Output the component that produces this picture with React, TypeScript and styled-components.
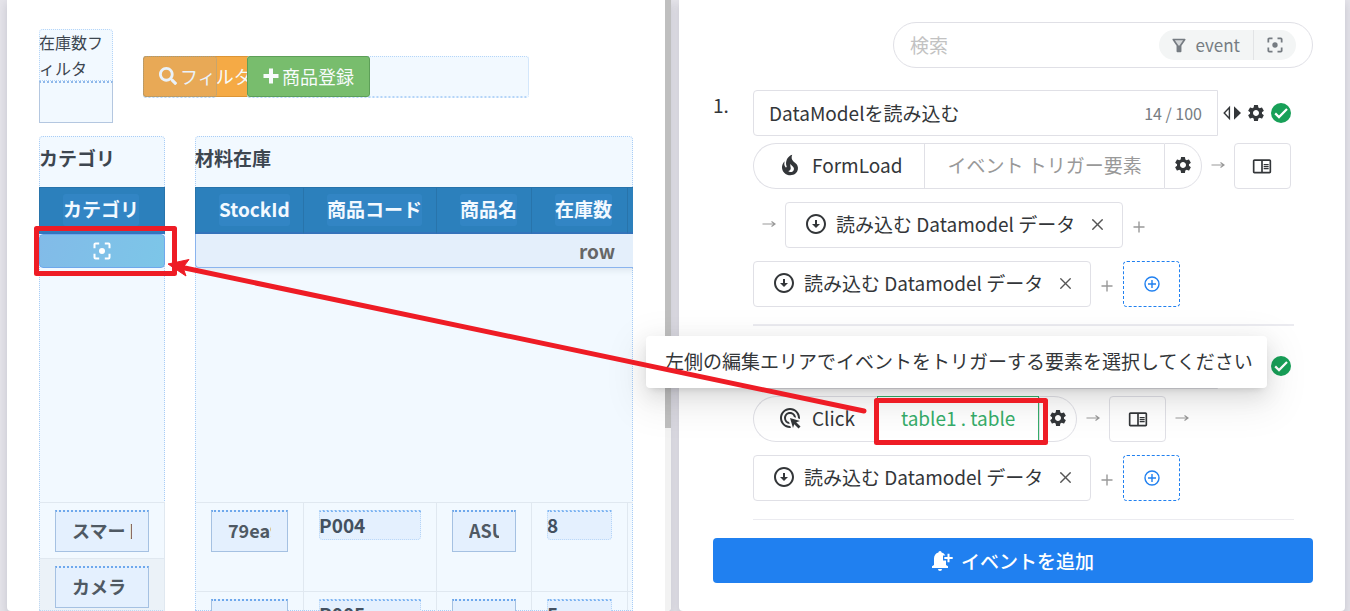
import React from "react";
import styled, { createGlobalStyle, css } from "styled-components";
import {
  MdSettings,
  MdOutlineChromeReaderMode,
  MdOutlineArrowCircleDown,
  MdAdsClick,
} from "react-icons/md";
import { FaSearch } from "react-icons/fa";
import { X } from "lucide-react";

const Global = createGlobalStyle`
  *, *::before, *::after { box-sizing: border-box; }
  body {
    margin: 0;
    background: #e4e3e9;
    color: #333639;
    font-family: "Noto Sans CJK JP", "Noto Sans", sans-serif;
    font-size: 19px;
    line-height: 28px;
  }
  button, input { font: inherit; color: inherit; margin: 0; }
  button { cursor: pointer; padding: 0; background: none; }
  svg { display: block; flex: none; }
`;

const Page = styled.div`
  position: relative;
  display: grid;
  grid-template-columns: minmax(0, 664fr) minmax(0, 666fr);
  gap: 8px;
  height: 100vh;
  padding: 0 5px 0 7px;
  overflow: hidden;
`;

const panel = css`
  background: #fff;
  border-radius: 0 0 4px 4px;
  box-shadow: 0 4px 8px rgba(40, 36, 70, 0.16);
`;

/* ---------- Preview side ---------- */

const Preview = styled.section`
  ${panel}
  display: flex;
  min-height: 0;
  overflow: hidden;
`;

const Canvas = styled.div`
  flex: 1;
  min-width: 0;
  display: grid;
  grid-template-columns: repeat(12, minmax(0, 1fr));
  grid-template-rows: auto auto;
  gap: 13px 30px;
  align-content: start;
  padding: 29px 32px 0;
`;

const ScrollTrack = styled.div`
  flex: none;
  width: 6px;
  background: #f2f2f2;
`;

const ScrollThumb = styled.div`
  height: 70%;
  background: #bfbfbf;
`;

const Cell = styled.div<{ $span: number }>`
  grid-column: span ${(p) => p.$span};
  min-width: 0;
`;

const ButtonCell = styled(Cell)`
  position: relative;
  align-self: start;
  height: 42px;
  margin-top: 27px;
  border: 1px dotted #b5d5f8;
  border-bottom-width: 2px;
  border-radius: 3px;
  background: #f2f9ff;
`;

const Veil = styled.span`
  position: absolute;
  inset: -1px;
  border: 1px dotted #a9a183;
  border-radius: 3px;
  background: rgba(115, 170, 249, 0.1);
  pointer-events: none;
`;

const FilterLabel = styled.label`
  display: block;
  height: 52px;
  border-radius: 4px 4px 0 0;
  outline: 1px dotted #b5d5f8;
  outline-offset: -1px;
  background: #f2f9ff;
  color: #3d4650;
  font-size: 16px;
  line-height: 26px;
`;

const FilterInput = styled.input`
  display: block;
  width: 100%;
  height: 42px;
  border: 1px solid #b4c7e0;
  border-top: 2px dotted #8fb8ea;
  border-radius: 0;
  background: #f2f9ff;
  padding: 0 8px;
  outline: 0;
`;

const ActionButton = styled.button<{ $tone: "orange" | "green" }>`
  display: flex;
  align-items: center;
  gap: 3px;
  height: 41px;
  margin: -1px;
  padding: 0 15px 2px;
  border: 1px solid ${(p) => (p.$tone === "green" ? "#5d9f58" : "#dc9536")};
  border-radius: 3px;
  background: ${(p) => (p.$tone === "green" ? "#78bd6d" : "#f5aa45")};
  color: #f7fbfb;
  font-size: 18px;
  white-space: nowrap;
`;

const TableCard = styled(Cell)`
  position: relative;
  isolation: isolate;
  overflow: hidden;
  &::before {
    content: "";
    position: absolute;
    z-index: -1;
    inset: 0;
    border: 1px dotted #a9cdf6;
    border-radius: 4px 4px 0 0;
    background: #f2f9ff;
  }
`;

const TableTitle = styled.h2`
  margin: 0;
  height: 51px;
  font-size: 19px;
  line-height: 44px;
  color: #3d4650;
`;

const Table = styled.table<{ $width: string }>`
  width: ${(p) => p.$width};
  table-layout: fixed;
  border-collapse: separate;
  border-spacing: 0;
`;

const HeadCell = styled.th`
  height: 47px;
  padding: 0 0 0 23px;
  border-right: 1px solid #2874ab;
  border-top: 1px solid #2874ab;
  border-bottom: 2px solid #3474bd;
  background: #2c80bc;
  color: #f2f9ff;
  text-align: left;
  white-space: nowrap;
  &:first-child { border-left: 1px solid #2874ab; }
`;

const HeadText = styled.span`
  display: inline-block;
  height: 32px;
  line-height: 30px;
  border-radius: 3px;
  background: #3285c4;
  vertical-align: middle;
`;

const RowBand = styled.td`
  height: 34px;
  padding: 0;
  border: 1px solid #8ab4ee;
  border-top: 0;
  border-radius: 0 0 4px 4px;
  background: #e4effb;
  box-shadow: 0 2px 6px rgba(60, 80, 110, 0.12);
  color: #666;
  font-weight: 700;
  line-height: 30px;
  text-align: center;
`;

const PickCell = styled.td`
  height: 34px;
  padding: 0;
`;

const PickButton = styled.button`
  display: grid;
  place-items: center;
  width: 100%;
  height: 34px;
  border: 1px solid #6ea8ec;
  border-radius: 4px;
  background: linear-gradient(110deg, #82bbe8, #7cc6e8);
  color: #fff;
`;

const BlankCell = styled.td`
  height: 234px;
  padding: 0;
`;

const BodyCell = styled.td<{ $height: number; $striped?: boolean }>`
  height: ${(p) => p.$height}px;
  padding: 7px 15px 0;
  border-top: 1px solid #e0e8f0;
  border-right: 1px solid #e0e8f0;
  background: ${(p) => (p.$striped ? "rgba(225, 232, 238, 0.4)" : "transparent")};
  vertical-align: top;
  &:first-child { border-left: 1px solid transparent; }
`;

const CellInput = styled.input`
  display: block;
  width: 100%;
  height: 42px;
  padding: 0 16px 3px;
  border: 1px solid #a5c1e2;
  border-top: 2px dotted #6ea8ec;
  border-radius: 0;
  background: #e4f0fe;
  color: #4f5963;
  font-size: 18px;
  font-weight: 700;
  outline: 0;
`;

const CellLabel = styled.div`
  height: 30px;
  border-top: 2px dotted #7fb5f2;
  border-radius: 0 0 4px 4px;
  outline: 1px dotted #b5d5f8;
  outline-offset: -1px;
  background: #e4f0fe;
  color: #435060;
  font-weight: 700;
  line-height: 26px;
`;

/* ---------- Event side ---------- */

const EventPanel = styled.section`
  ${panel}
  display: flex;
  flex-direction: column;
  padding: 22px 32px 28px 34px;
`;

const SearchBox = styled.div`
  display: flex;
  align-items: center;
  align-self: flex-end;
  width: 70%;
  height: 46px;
  padding: 0 16px;
  border: 1px solid #e0e0e6;
  border-radius: 23px;
`;

const SearchInput = styled.input`
  flex: 1;
  min-width: 0;
  padding: 0;
  border: 0;
  outline: 0;
  background: none;
  &::placeholder { color: #c2c2c2; opacity: 1; }
`;

const TagGroup = styled.div`
  display: flex;
  height: 30px;
  overflow: hidden;
  border-radius: 15px;
  background: #f3f5f5;
  color: #767c82;
`;

const TagButton = styled.button`
  display: flex;
  align-items: center;
  gap: 10px;
  padding: 0 13px;
  border: 0;
  font-size: 17px;
  & + & { border-left: 1px solid #e2e4e6; }
`;

const EventList = styled.ol`
  list-style: none;
  margin: 22px 0 18px;
  padding: 0 19px 0 0;
`;

const EventItem = styled.li`
  position: relative;
  display: grid;
  grid-template-columns: 40px minmax(0, 1fr);
  & + & { margin-top: 17px; }
`;

const Index = styled.span`
  grid-column: 1;
  line-height: 30px;
`;

const EventBody = styled.div<{ $rule: number }>`
  grid-column: 2;
  padding-bottom: ${(p) => (p.$rule > 1 ? 17 : 18)}px;
  border-bottom: ${(p) => p.$rule}px solid #ebebf0;
`;

const NameRow = styled.div`
  display: flex;
  align-items: center;
  gap: 5px;
  padding-right: 3px;
`;

const NameField = styled.div`
  flex: 1;
  min-width: 0;
  display: flex;
  align-items: center;
  height: 46px;
  padding: 0 15px;
  border: 1px solid #e0e0e6;
  border-radius: 4px 0 0 4px;
`;

const NameInput = styled.input`
  flex: 1;
  min-width: 0;
  padding: 0;
  border: 0;
  outline: 0;
  background: none;
`;

const Counter = styled.span`
  color: #767c82;
  font-size: 16px;
`;

const IconButton = styled.button`
  display: grid;
  place-items: center;
  border: 0;
`;

const Flow = styled.div`
  display: flex;
  flex-wrap: wrap;
  row-gap: 13px;
  margin-top: 7px;
`;

const Pill = styled.div`
  display: flex;
  height: 46px;
`;

const Segment = styled.button<{ $kind: "type" | "target" | "picked" | "more" }>`
  display: flex;
  align-items: center;
  gap: 10px;
  border: 1px solid #e0e0e6;
  white-space: nowrap;
  ${(p) =>
    p.$kind === "type" &&
    css`
      padding: 0 22px 2px 24px;
      border-right: 0;
      border-radius: 23px 0 0 23px;
    `}
  ${(p) =>
    p.$kind === "target" &&
    css`
      padding: 0 22px 2px;
      border-right: 0;
      color: #999;
    `}
  ${(p) =>
    p.$kind === "picked" &&
    css`
      padding: 0 23px 2px;
      border-color: #36ad6a;
      color: #36ad6a;
    `}
  ${(p) =>
    p.$kind === "more" &&
    css`
      width: 38px;
      padding: 0 8px 2px;
      border-radius: 0 23px 23px 0;
    `}
`;

const Joint = styled.span`
  display: grid;
  place-items: center;
  width: 32px;
  height: 46px;
  padding-bottom: 2px;
  color: #999;
`;

const BoxButton = styled.button<{ $dashed?: boolean }>`
  display: grid;
  place-items: center;
  width: 57px;
  height: 46px;
  border: 1px ${(p) => (p.$dashed ? "dashed #2080f0" : "solid #e0e0e6")};
  border-radius: 4px;
  color: ${(p) => (p.$dashed ? "#2080f0" : "#333639")};
`;

const Chip = styled.div`
  display: flex;
  align-items: center;
  gap: 8px;
  height: 46px;
  padding: 0 15px 2px 18px;
  border: 1px solid #e0e0e6;
  border-radius: 4px;
  white-space: nowrap;
`;

const ChipClose = styled(IconButton)`
  margin-left: 5px;
  color: #555;
`;

const AddEvent = styled.button`
  display: flex;
  align-items: center;
  justify-content: center;
  gap: 8px;
  width: 100%;
  height: 45px;
  border: 0;
  border-radius: 4px;
  background: #2080f0;
  color: #fff;
  font-weight: 500;
`;

const Hint = styled.div`
  position: absolute;
  z-index: 2;
  top: -7px;
  left: -67px;
  padding: 11px 14px 13px 19px;
  border-radius: 4px;
  background: #fff;
  white-space: nowrap;
  box-shadow: 0 4px 8px -5px rgba(0, 0, 0, 0.2), 0 8px 21px rgba(0, 0, 0, 0.1),
    0 12px 37px 11px rgba(0, 0, 0, 0.06);
`;

const Annotation = styled.svg`
  position: absolute;
  z-index: 3;
  top: 0;
  left: 0;
  pointer-events: none;
`;

/* ---------- Icons ---------- */

const Arrow = () => (
  <Joint>
    <svg width="14" height="10" viewBox="0 0 14 10" fill="none" stroke="currentColor" strokeWidth="1.2">
      <path d="M0.5 5H13M9.5 2.5 13 5 9.5 7.500" />
    </svg>
  </Joint>
);

const PlusJoint = () => (
  <Joint>
    <svg width="12" height="18" viewBox="0 0 12 18" fill="none" stroke="currentColor" strokeWidth="1.4">
      <path d="M0.5 12H11.5M6 6.5V17.5" />
    </svg>
  </Joint>
);

const SplitIcon = () => (
  <svg width="18" height="16" viewBox="0 0 18 16">
    <path d="M6.4 2.6V13.4L1.2 8Z" fill="none" stroke="currentColor" strokeWidth="1.4" />
    <path d="M11 1.2V14.8L18 8Z" fill="currentColor" />
  </svg>
);

const CheckIcon = () => (
  <svg width="20" height="20" viewBox="0 0 20 20">
    <circle cx="10" cy="10" r="10" fill="#18a058" />
    <path d="M4.2 10.4 8 14.1 16 6" fill="none" stroke="#fff" strokeWidth="2.2" />
  </svg>
);

const FocusIcon = ({ size }: { size: number }) => (
  <svg width={size} height={size} viewBox="0 0 18 18" fill="none" stroke="currentColor" strokeWidth="2">
    <path d="M1.500 6.200V2.500a1 1 0 0 1 1-1H6.200M11.800 1.500H15.500a1 1 0 0 1 1 1V6.200M16.500 11.800V15.500a1 1 0 0 1-1 1H11.800M6.200 16.500H2.500a1 1 0 0 1-1-1V11.800" />
    <circle cx="9" cy="9" r="3" fill="currentColor" stroke="none" />
  </svg>
);

const FunnelIcon = () => (
  <svg width="14" height="15" viewBox="0 0 14 15">
    <path d="M1.300 1.500H12.700L8.600 7.400V13.300H5.400V7.400Z" fill="#d3d6d8" stroke="currentColor" strokeWidth="1.700" strokeLinejoin="round" />
    <path d="M5.400 7.400H8.600V13.300H5.400Z" fill="currentColor" />
  </svg>
);

const FireIcon = () => (
  <svg width="24" height="24" viewBox="1.500 1.500 21 21" fill="currentColor">
    <path d="M17.66 11.2c-.23-.3-.51-.56-.77-.82-.67-.6-1.43-1.03-2.07-1.66C13.33 7.26 13 4.85 13.95 3c-.95.23-1.78.75-2.49 1.32-2.59 2.08-3.61 5.75-2.39 8.9.04.1.08.2.08.33 0 .22-.15.42-.35.5-.23.1-.47.04-.66-.12a.58.58 0 0 1-.14-.17c-1.13-1.43-1.31-3.48-.55-5.12C5.78 10 4.87 12.3 5 14.47c.06.5.12 1 .29 1.5.14.6.41 1.2.71 1.73 1.08 1.73 2.95 2.97 4.96 3.22 2.14.27 4.43-.12 6.07-1.6 1.83-1.66 2.47-4.32 1.53-6.6l-.13-.26c-.21-.46-.77-1.26-.77-1.26m-3.16 6.3c-.28.24-.74.5-1.1.6-1.12.4-2.24-.16-2.9-.82 1.19-.28 1.9-1.16 2.11-2.05.17-.8-.15-1.46-.28-2.23-.12-.74-.1-1.37.17-2.06.19.38.39.76.63 1.06.77 1 1.98 1.44 2.24 2.8.04.14.06.28.06.43.03.82-.33 1.72-.93 2.27z" />
  </svg>
);

const BoldPlusIcon = () => (
  <svg width="16" height="16" viewBox="0 0 16 16" fill="none" stroke="currentColor" strokeWidth="4">
    <path d="M0.500 8H15.500M8 0.500V15.500" />
  </svg>
);

const AddCircleIcon = () => (
  <svg width="16" height="16" viewBox="0 0 16 16" fill="none" stroke="currentColor" strokeWidth="1.400">
    <circle cx="8" cy="8" r="7" />
    <path d="M4 8H12M8 4V12" />
  </svg>
);

const BellPlusIcon = () => (
  <svg width="21" height="20" viewBox="0 0 21 20">
    <path d="M8 0a1.600 1.600 0 0 1 1.600 1.600C12.400 2.300 14 4.700 14 7.500V14l2 1.300V17H0V15.300L2 14V7.500C2 4.700 3.600 2.300 6.400 1.600A1.600 1.600 0 0 1 8 0ZM6 18H10a2 2 0 0 1-4 0Z" fill="currentColor" />
    <path d="M11 7H21M16.500 2V12" stroke="#2080f0" strokeWidth="5" />
    <path d="M12.300 7H20.700M16.500 2.800V11.200" stroke="currentColor" strokeWidth="2" />
  </svg>
);

/* ---------- Composed parts ---------- */

const LoadChip = () => (
  <Chip>
    <MdOutlineArrowCircleDown size={24} />
    <span>読み込む Datamodel データ</span>
    <ChipClose aria-label="削除">
      <X size={19} strokeWidth={1.7} />
    </ChipClose>
  </Chip>
);

const EventName = ({ label, value, count }: { label: string; value: string; count?: string }) => (
  <NameRow>
    <NameField>
      <NameInput aria-label={label} defaultValue={value} />
      {count && <Counter>{count}</Counter>}
    </NameField>
    <IconButton aria-label="分割"><SplitIcon /></IconButton>
    <IconButton aria-label="設定"><MdSettings size={20} /></IconButton>
    <CheckIcon />
  </NameRow>
);

const stock = [
  { id: "79ea9c", code: "P004", name: "ASUS", count: "8" },
  { id: "8bd21f", code: "P005", name: "DELL", count: "5" },
];

export default function App() {
  return (
    <>
      <Global />
      <Page>
        <Preview>
          <Canvas>
            <Cell $span={2}>
              <FilterLabel htmlFor="stock-filter">在庫数フィルタ</FilterLabel>
              <FilterInput id="stock-filter" />
            </Cell>
            <ButtonCell $span={2}>
              <ActionButton $tone="orange"><FaSearch size={18} />フィルタ</ActionButton>
              <Veil />
            </ButtonCell>
            <ButtonCell $span={6}>
              <ActionButton $tone="green"><BoldPlusIcon />商品登録</ActionButton>
            </ButtonCell>

            <TableCard $span={3}>
              <TableTitle>カテゴリ</TableTitle>
              <Table $width="100%">
                <thead>
                  <tr><HeadCell><HeadText>カテゴリ</HeadText></HeadCell></tr>
                </thead>
                <tbody>
                  <tr>
                    <PickCell>
                      <PickButton aria-label="要素を選択"><FocusIcon size={18} /></PickButton>
                    </PickCell>
                  </tr>
                  <tr><BlankCell /></tr>
                  <tr>
                    <BodyCell $height={56}><CellInput aria-label="カテゴリ 1" defaultValue="スマートフォン" /></BodyCell>
                  </tr>
                  <tr>
                    <BodyCell $height={56} $striped><CellInput aria-label="カテゴリ 2" defaultValue="カメラ" /></BodyCell>
                  </tr>
                </tbody>
              </Table>
            </TableCard>

            <TableCard $span={9}>
              <TableTitle>材料在庫</TableTitle>
              <Table $width="804px">
                <colgroup>
                  <col width="109" />
                  <col width="133" />
                  <col width="95" />
                  <col width="96" />
                  <col />
                </colgroup>
                <thead>
                  <tr>
                    <HeadCell><HeadText>StockId</HeadText></HeadCell>
                    <HeadCell><HeadText>商品コード</HeadText></HeadCell>
                    <HeadCell><HeadText>商品名</HeadText></HeadCell>
                    <HeadCell><HeadText>在庫数</HeadText></HeadCell>
                    <HeadCell />
                  </tr>
                </thead>
                <tbody>
                  <tr><RowBand colSpan={5}>row</RowBand></tr>
                  <tr><BlankCell colSpan={5} /></tr>
                  {stock.map((s) => (
                    <tr key={s.id}>
                      <BodyCell $height={89}><CellInput aria-label="StockId" defaultValue={s.id} /></BodyCell>
                      <BodyCell $height={89}><CellLabel>{s.code}</CellLabel></BodyCell>
                      <BodyCell $height={89}><CellInput aria-label="商品名" defaultValue={s.name} /></BodyCell>
                      <BodyCell $height={89}><CellLabel>{s.count}</CellLabel></BodyCell>
                      <BodyCell $height={89} />
                    </tr>
                  ))}
                </tbody>
              </Table>
            </TableCard>
          </Canvas>
          <ScrollTrack><ScrollThumb /></ScrollTrack>
        </Preview>

        <EventPanel>
          <SearchBox>
            <SearchInput aria-label="検索" placeholder="検索" />
            <TagGroup>
              <TagButton><FunnelIcon />event</TagButton>
              <TagButton aria-label="要素で絞り込む"><FocusIcon size={16} /></TagButton>
            </TagGroup>
          </SearchBox>

          <EventList>
            <EventItem>
              <Index>1.</Index>
              <EventBody $rule={2}>
                <EventName label="イベント名 1" value="DataModelを読み込む" count="14 / 100" />
                <Flow>
                  <Pill>
                    <Segment $kind="type"><FireIcon />FormLoad</Segment>
                    <Segment $kind="target">イベント トリガー要素</Segment>
                    <Segment $kind="more" aria-label="設定"><MdSettings size={20} /></Segment>
                  </Pill>
                  <Arrow />
                  <BoxButton aria-label="パネル"><MdOutlineChromeReaderMode size={20} /></BoxButton>
                  <Arrow />
                  <LoadChip />
                  <PlusJoint />
                  <LoadChip />
                  <PlusJoint />
                  <BoxButton $dashed aria-label="追加"><AddCircleIcon /></BoxButton>
                </Flow>
              </EventBody>
            </EventItem>
            <EventItem>
              <EventBody $rule={1}>
                <EventName label="イベント名 2" value="" />
                <Flow>
                  <Pill>
                    <Segment $kind="type"><MdAdsClick size={24} />Click</Segment>
                    <Segment $kind="picked">table1 . table</Segment>
                    <Segment $kind="more" aria-label="設定"><MdSettings size={20} /></Segment>
                  </Pill>
                  <Arrow />
                  <BoxButton aria-label="パネル"><MdOutlineChromeReaderMode size={20} /></BoxButton>
                  <Arrow />
                  <LoadChip />
                  <PlusJoint />
                  <BoxButton $dashed aria-label="追加"><AddCircleIcon /></BoxButton>
                </Flow>
              </EventBody>
              <Hint role="tooltip">左側の編集エリアでイベントをトリガーする要素を選択してください</Hint>
            </EventItem>
          </EventList>

          <AddEvent><BellPlusIcon />イベントを追加</AddEvent>
        </EventPanel>

        <Annotation width="1350" height="611" viewBox="0 0 1350 611" fill="none" stroke="#ee1c25" strokeWidth="5" strokeLinejoin="round" aria-hidden="true">
          <rect x="36.5" y="228.5" width="138" height="45" />
          <rect x="876.5" y="400.5" width="169" height="42" />
          <path d="M180 267 864 411" strokeLinecap="round" />
          <path d="M168 264 189 259.500 183 267.500 186 276Z" fill="#ee1c25" strokeWidth="1" />
        </Annotation>
      </Page>
    </>
  );
}
